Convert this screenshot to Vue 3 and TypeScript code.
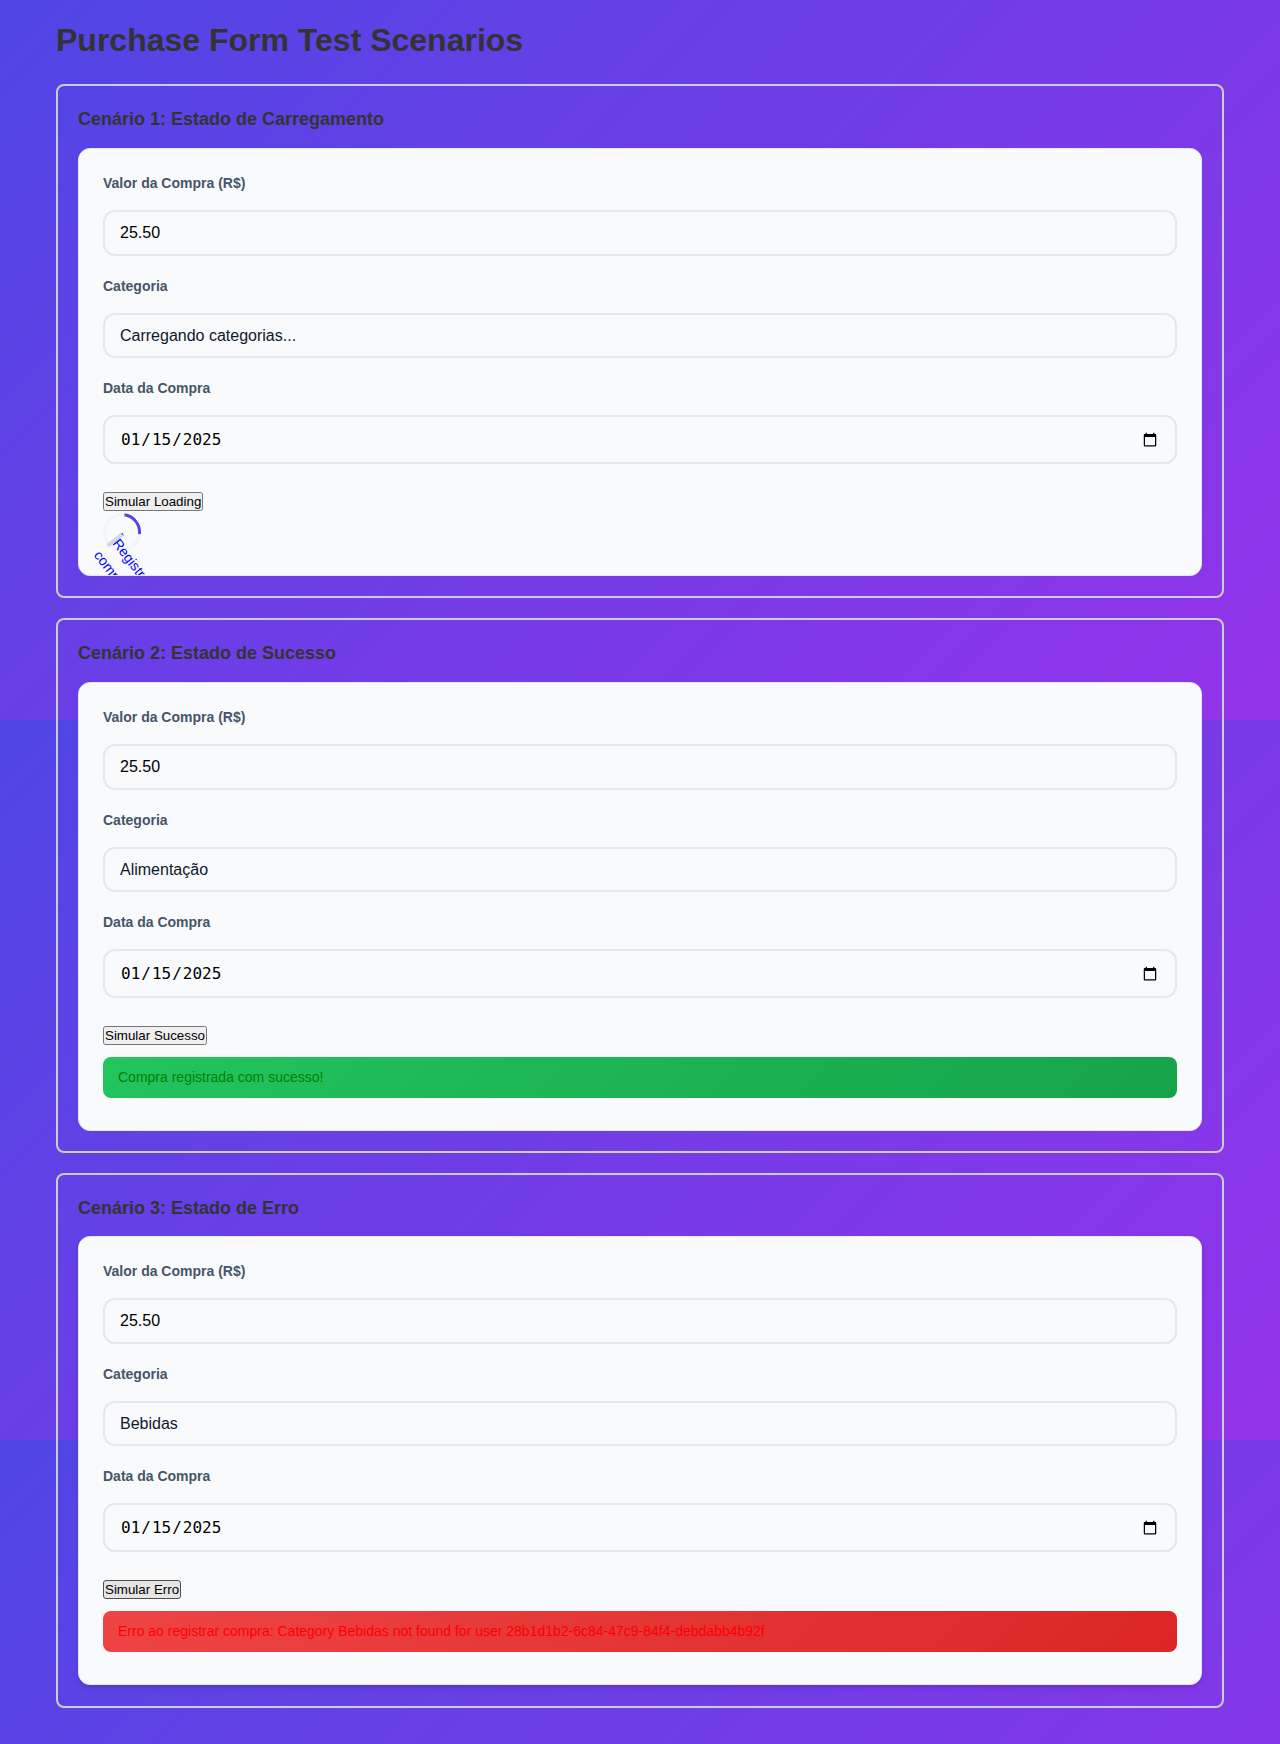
<script setup lang="ts">
interface Scenario {
  id: number
  title: string
  category: string
  action: string
  state: 'loading' | 'success' | 'error'
  message?: string
}

const scenarios: Scenario[] = [
  { id: 1, title: 'Cenário 1: Estado de Carregamento', category: 'Carregando categorias...', action: 'Simular Loading', state: 'loading' },
  { id: 2, title: 'Cenário 2: Estado de Sucesso', category: 'Alimentação', action: 'Simular Sucesso', state: 'success', message: 'Compra registrada com sucesso!' },
  {
    id: 3,
    title: 'Cenário 3: Estado de Erro',
    category: 'Bebidas',
    action: 'Simular Erro',
    state: 'error',
    message: 'Erro ao registrar compra: Category Bebidas not found for user 28b1d1b2-6c84-47c9-84f4-debdabb4b92f',
  },
]
</script>

<template>
  <main class="page">
    <h1>Purchase Form Test Scenarios</h1>
    <section v-for="s in scenarios" :key="s.id" class="scenario" :class="s.state">
      <h3>{{ s.title }}</h3>
      <form class="card" @submit.prevent>
        <div class="field">
          <label :for="'amount' + s.id">Valor da Compra (R$)</label>
          <input :id="'amount' + s.id" class="amount" type="text" value="25.50" />
        </div>
        <div class="field">
          <label :for="'category' + s.id">Categoria</label>
          <select :id="'category' + s.id">
            <option>{{ s.category }}</option>
          </select>
        </div>
        <div class="field">
          <label :for="'date' + s.id">Data da Compra</label>
          <input :id="'date' + s.id" class="date" type="date" value="2025-01-15" />
        </div>
        <button type="button">{{ s.action }}</button>
        <div v-if="s.state === 'loading'" class="loading-ring">
          <span class="bar"></span>
          <span class="loading-text">Registrando compra...</span>
        </div>
        <div v-else class="alert">{{ s.message }}</div>
      </form>
    </section>
  </main>
</template>

<style>
body {
  background: linear-gradient(135deg, #4f46e5 0%, #9333ea 100%) 0 0 / 100% 720px repeat;
}
</style>

<style scoped>
.page {
  box-sizing: border-box;
  width: 1280px;
  height: 1744px;
  padding: 20px 56px 0;
  font-family: "Liberation Sans", Arial, sans-serif;
  color: #333;
}
h1 {
  margin: 0 0 24px;
  font-size: 32px;
  line-height: 40px;
  font-weight: 700;
}
.scenario {
  box-sizing: border-box;
  height: 535px;
  margin-bottom: 20px;
  padding: 20px;
  border: 2px solid #ccc;
  border-radius: 8px;
}
.scenario.loading {
  height: 514px;
}
h3 {
  margin: 0 0 15px;
  font-size: 18px;
  line-height: 27px;
  font-weight: 700;
}
.error h3 {
  margin-bottom: 14px;
}
.card {
  box-sizing: border-box;
  height: 449px;
  padding: 24px;
  overflow: hidden;
  background: #f8fafc;
  border: 1px solid #e2e8f0;
  border-radius: 12px;
}
.loading .card {
  height: 428px;
}
.error .card {
  box-shadow: 0 4px 6px -1px rgba(0, 0, 0, 0.1), 0 2px 4px -1px rgba(0, 0, 0, 0.06);
}
.field {
  margin-bottom: 20px;
}
label {
  display: block;
  height: 37px;
  font-size: 14px;
  line-height: 21px;
  font-weight: 600;
  color: #475569;
}
input,
select {
  display: block;
  box-sizing: border-box;
  width: 100%;
  margin: 0;
  padding: 12px 15px;
  border: 2px solid #e2e8f0;
  border-radius: 12px;
  background: #f8fafc;
  font-family: inherit;
  font-size: 16px;
  color: #000;
  outline: none;
}
.amount {
  height: 46px;
}
select {
  height: 45px;
  appearance: none;
  color: #0f172a;
}
.date {
  height: 49px;
  font-family: "DejaVu Sans Mono", monospace;
}
button {
  display: block;
  margin: 28px 0 0;
  padding: 0;
  font-family: inherit;
  font-size: 13.3333px;
}
.error button {
  height: 19px;
  padding: 0 1px;
  border: 1px solid #4f4f4f;
  border-radius: 3px;
  background: #e5e5e5;
  color: #000;
}
.alert {
  box-sizing: border-box;
  height: 41px;
  margin-top: 12px;
  padding: 10px 15px;
  border-radius: 8px;
  font-size: 14px;
  line-height: 21px;
}
.success .alert {
  background: linear-gradient(135deg, #22c55e, #16a34a);
  color: green;
}
.error .alert {
  background: linear-gradient(135deg, #ef4444, #dc2626);
  color: red;
}
.loading-ring {
  position: relative;
  width: 32px;
  height: 32px;
  margin-top: 2px;
  border: 3px solid #f1f5f9;
  border-top-color: #4f46e5;
  border-radius: 50%;
  transform: rotate(52.5deg);
}
.bar {
  position: absolute;
  left: 16px;
  top: 16px;
  box-sizing: border-box;
  width: 4px;
  height: 20px;
  border: 2px solid #cbd5e1;
  border-top-color: #4f46e5;
  border-radius: 2px;
}
.loading-text {
  position: absolute;
  left: 17px;
  top: 15px;
  width: 80px;
  font-size: 14px;
  line-height: 22px;
  text-indent: 2px;
  color: blue;
}
</style>
